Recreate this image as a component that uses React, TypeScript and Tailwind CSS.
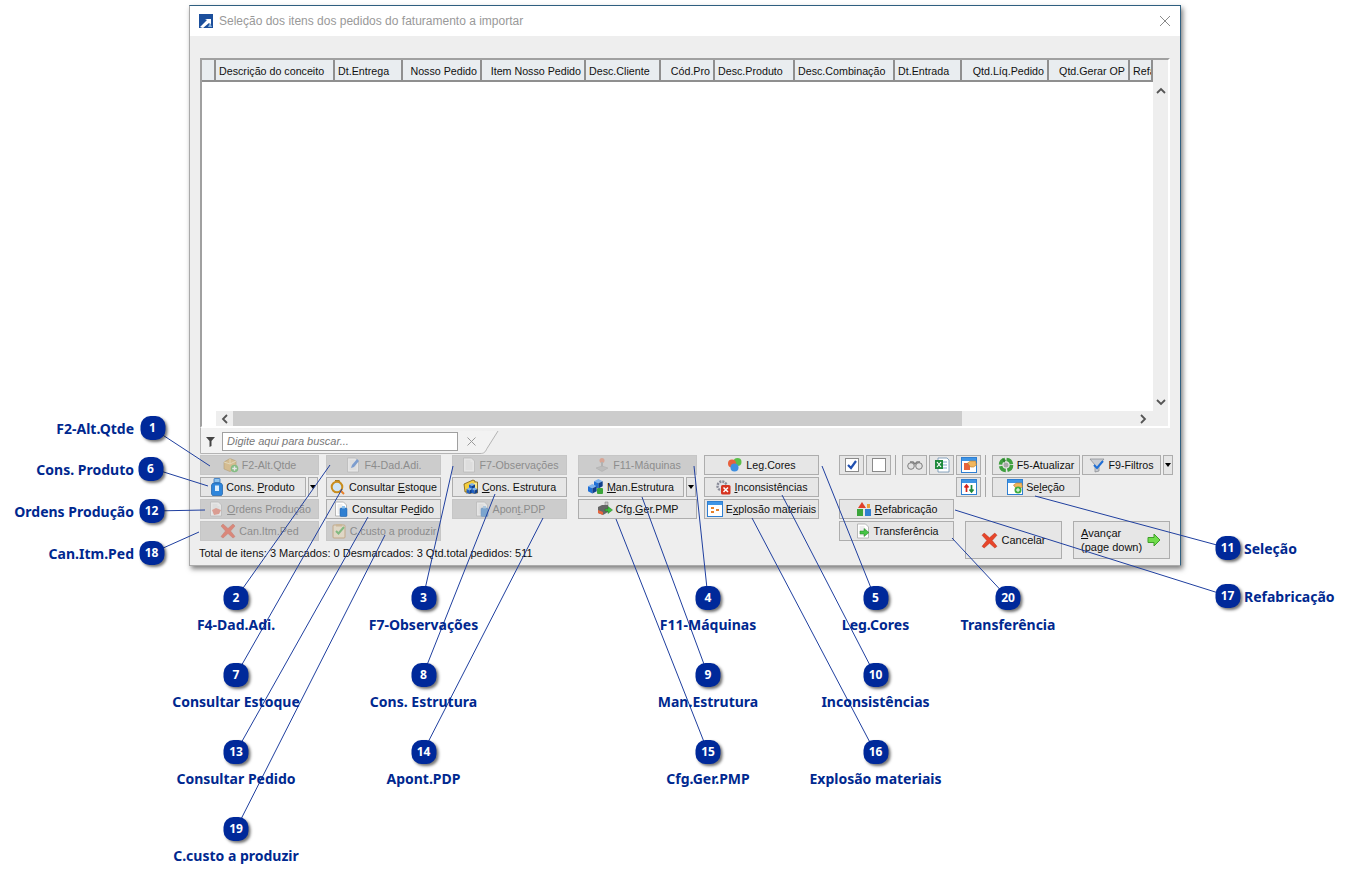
import { ReactNode } from "react";

// ---- small toolbar icons, 16x16 -------------------------------------------
const Box = () => (
  <svg width="16" height="16" viewBox="0 0 16 16">
    <path d="M1 5l6-3.500 6 2.500v7l-6 3.500-6-2.500z" fill="#dcae57" stroke="#9a7428" strokeWidth=".6" />
    <path d="M7 1.500V7M1 5l6 2 6-3" fill="none" stroke="#f5e2a8" />
    <circle cx="11.500" cy="11.500" r="3.800" fill="#3fae3f" />
    <path d="M11.500 9.200v4.600M9.200 11.500h4.600" stroke="#fff" strokeWidth="1.400" />
  </svg>
);
const Bottle = () => (
  <svg width="12" height="18" viewBox="0 0 12 18">
    <rect x="3" y=".5" width="6" height="4" rx=".5" fill="#8ec4ef" stroke="#1f66b5" strokeWidth=".7" />
    <path d="M2 5h8l1.500 2v9l-1 1.500h-9l-1-1.500V7z" fill="#2f86db" stroke="#1b5ea8" strokeWidth=".7" />
    <rect x="4" y="7.500" width="4" height="5.500" fill="#dcedfb" />
  </svg>
);
const Paper = ({ children }: { children?: ReactNode }) => (
  <svg width="16" height="16" viewBox="0 0 16 16">
    <path d="M2.500 1h8l3 3v11h-11z" fill="#fff" stroke="#a8a8a8" strokeWidth=".8" />
    <path d="M4.500 4h5M4.500 6h7M4.500 8h7M4.500 10h7M4.500 12h7" stroke="#d4d4d4" strokeWidth=".8" />
    {children}
  </svg>
);
const BigX = ({ s = 16 }: { s?: number }) => (
  <svg width={s} height={s} viewBox="0 0 16 16">
    <path d="M1 3l2-2 5 4.500L13 1l2 2-4.500 5 4.500 5.500-2 1.500L8 10.500 3 15l-2-1.500L5.500 8z" fill="#e8452a" stroke="#b8331c" strokeWidth=".5" />
  </svg>
);
const Ring = () => (
  <svg width="16" height="16" viewBox="0 0 16 16">
    <path d="M5 1.500h4l1 2" fill="none" stroke="#a8791f" strokeWidth="1.200" />
    <circle cx="7" cy="8" r="5.300" fill="#cfe5f7" stroke="#c98d1e" strokeWidth="2" />
    <path d="M11 12l3 3" stroke="#e8812a" strokeWidth="2" />
  </svg>
);
const PaperBottle = () => (
  <Paper>
    <rect x="7" y="7" width="7" height="8.500" rx="1" fill="#2f7fd1" stroke="#1b5ea8" strokeWidth=".5" />
    <rect x="9" y="5" width="3" height="2.500" fill="#8ec4ef" />
  </Paper>
);
const Clip = () => (
  <svg width="16" height="16" viewBox="0 0 16 16">
    <rect x="2" y="2" width="12" height="13" rx="1" fill="#f3e2c2" stroke="#b98a4a" />
    <rect x="5" y="1" width="6" height="2.500" fill="#c9a36a" />
    <path d="M5 8l2.500 2.500L13 4" fill="none" stroke="#38a838" strokeWidth="2" />
  </svg>
);
const Cube = ({ x, y, c }: { x: number; y: number; c: string }) => (
  <g transform={`translate(${x} ${y})`}>
    <path d="M0 1.500L3 0l3 1.500L3 3z" fill="#7fb4ee" />
    <path d="M0 1.500L3 3v3.500L0 5z" fill={c} />
    <path d="M6 1.500L3 3v3.500L6 5z" fill="#0f3f8c" />
  </g>
);
const FolderCubes = () => (
  <svg width="16" height="16" viewBox="0 0 16 16">
    <path d="M1 5l9-4 2 1v11H2z" fill="#f5cf3f" stroke="#7a5a10" strokeWidth=".8" />
    <path d="M12 3h2.500v11H3" fill="#fbe88c" stroke="#7a5a10" strokeWidth=".8" />
    <Cube x={6} y={4} c="#1f5fc4" />
    <Cube x={3.500} y={8.500} c="#1f5fc4" />
    <Cube x={8.500} y={8.500} c="#1f5fc4" />
  </svg>
);
const Joystick = () => (
  <svg width="16" height="16" viewBox="0 0 16 16">
    <circle cx="8" cy="3.500" r="2.500" fill="#e2805f" />
    <rect x="7" y="5" width="2" height="5" fill="#999" />
    <path d="M2 11l6-2 6 2-6 3.500z" fill="#b0b0b0" stroke="#8a8a8a" strokeWidth=".5" />
  </svg>
);
const Cubes = () => (
  <svg width="16" height="16" viewBox="0 0 16 16">
    <g transform="translate(6 0) scale(1.450)"><path d="M0 1.500L3 0l3 1.500L3 3z" fill="#7fb4ee" /><path d="M0 1.500L3 3v3.500L0 5z" fill="#1f6fd6" /><path d="M6 1.500L3 3v3.500L6 5z" fill="#0f3f8c" /></g>
    <g transform="translate(0 5) scale(1.450)"><path d="M0 1.500L3 0l3 1.500L3 3z" fill="#7fb4ee" /><path d="M0 1.500L3 3v3.500L0 5z" fill="#1f6fd6" /><path d="M6 1.500L3 3v3.500L6 5z" fill="#0f3f8c" /></g>
    <rect x="9" y="9" width="6" height="6" rx="1" fill="#3ba53b" />
  </svg>
);
const Printer = () => (
  <svg width="16" height="16" viewBox="0 0 16 16">
    <path d="M8 1h3v4H8z" fill="#c9c9c9" stroke="#777" strokeWidth=".5" />
    <path d="M1 6l4-2h6v7l-5 3-5-2z" fill="#666" />
    <path d="M1 9l5 2v3l-5-2z" fill="#e8643c" />
    <path d="M8 8h3V5.500L15.500 9 11 12.500V10H8z" fill="#3fbf3f" stroke="#1f7f1f" strokeWidth=".5" />
  </svg>
);
const Dots = () => (
  <svg width="16" height="16" viewBox="0 0 16 16">
    <circle cx="10.500" cy="5" r="4" fill="#5bbf4a" />
    <circle cx="5" cy="6.500" r="4" fill="#e8603c" />
    <circle cx="7.500" cy="10.500" r="4" fill="#3f8fe0" />
  </svg>
);
const GearX = () => (
  <svg width="16" height="16" viewBox="0 0 16 16">
    <circle cx="7" cy="7" r="4.500" fill="#dfe1e6" stroke="#8a8c99" strokeWidth="2.400" strokeDasharray="2 1" />
    <rect x="6" y="6" width="9.500" height="9.500" rx="1.500" fill="#d63320" />
    <path d="M8.500 8.500l4.500 4.500M13 8.500L8.500 13" stroke="#fff" strokeWidth="1.500" />
  </svg>
);
const Win = ({ children }: { children?: ReactNode }) => (
  <svg width="16" height="16" viewBox="0 0 16 16">
    <rect x=".5" y=".5" width="15" height="15" fill="#fff" stroke="#2f7fd1" />
    <rect x="1" y="1" width="14" height="3" fill="#3f95e6" />
    {children}
  </svg>
);
const Check = ({ on }: { on?: boolean }) => (
  <svg width="14" height="14" viewBox="0 0 14 14">
    <rect x=".5" y=".5" width="13" height="13" fill="#fff" stroke="#8a8a8a" />
    {on && <path d="M3 7l3 3 5-7" fill="none" stroke="#1f4fb0" strokeWidth="2.200" />}
  </svg>
);
const Binoculars = () => (
  <svg width="16" height="12" viewBox="0 0 16 12">
    <circle cx="4" cy="7" r="3.300" fill="#e2e2e2" stroke="#7d7d7d" />
    <circle cx="12" cy="7" r="3.300" fill="#e2e2e2" stroke="#7d7d7d" />
    <path d="M3 3h3l2 2 2-2h3" fill="none" stroke="#7d7d7d" strokeWidth="1.400" />
  </svg>
);
const Excel = () => (
  <svg width="16" height="16" viewBox="0 0 16 16">
    <path d="M4 1h9l2 2v12H4z" fill="#fff" stroke="#6c8fb0" strokeWidth=".8" />
    <path d="M8 5h5M8 8h5M8 11h5" stroke="#7ea6c9" />
    <rect x="1" y="3" width="8" height="9" fill="#1f8a3c" />
    <path d="M3 5l4 5M7 5l-4 5" stroke="#fff" strokeWidth="1.200" />
  </svg>
);
const Hand = () => (
  <svg width="10" height="8" x="6" y="3" viewBox="0 0 9 8">
    <path d="M0 3l3-2h5l1 4-3 2H3z" fill="#f2b75e" stroke="#b97a26" strokeWidth=".6" />
  </svg>
);
const ArrowsUD = () => (
  <Win>
    <path d="M5.500 13V7M3.500 8.500l2-2.500 2 2.500" fill="none" stroke="#d4241c" strokeWidth="1.700" />
    <path d="M10.500 6v6M8.500 10.500l2 2.500 2-2.500" fill="none" stroke="#1f8a3c" strokeWidth="1.700" />
  </Win>
);
const Recycle = () => (
  <svg width="16" height="16" viewBox="0 0 16 16">
    <circle cx="8" cy="8" r="5.500" fill="none" stroke="#3f9f3f" strokeWidth="3.600" strokeDasharray="7 1.600" />
    <circle cx="8" cy="8" r="2.500" fill="#a8a8a8" />
    <path d="M4 1.500l4 1.500-2 3z" fill="#2f7f2f" />
  </svg>
);
const Funnel = () => (
  <svg width="16" height="16" viewBox="0 0 16 16">
    <path d="M1 2h14L10 8v6l-4 1V8z" fill="#c9ccd2" stroke="#84868c" strokeWidth=".7" />
    <path d="M5 8l3 3 6-7" fill="none" stroke="#1f6fd6" strokeWidth="2" />
  </svg>
);
const Triangles = () => (
  <svg width="16" height="16" viewBox="0 0 16 16">
    <path d="M6 1l4 6H2z" fill="#e0402a" />
    <rect x="1" y="8" width="6" height="7" fill="#3ba53b" />
    <rect x="9" y="8" width="6" height="7" fill="#2f7fd1" />
    <path d="M11 3h3v4h-3z" fill="#e8a13a" />
  </svg>
);
const PageArrow = () => (
  <Paper>
    <path d="M5 8h4V5.500l5 4-5 4V11H5z" fill="#45c445" stroke="#1f7f1f" strokeWidth=".5" />
  </Paper>
);
const GreenArrow = () => (
  <svg width="14" height="14" viewBox="0 0 14 14">
    <path d="M1 4.500h6V1l6 6-6 6V9.500H1z" fill="#6fdc4a" stroke="#3f9f2a" />
  </svg>
);

// ---- buttons --------------------------------------------------------------
const Btn = ({
  icon,
  off,
  className = "",
  children,
}: {
  icon?: ReactNode;
  off?: boolean;
  className?: string;
  children?: ReactNode;
}) => (
  <div
    className={`h-5 flex items-center justify-center gap-[3px] border text-[10.7px] whitespace-nowrap overflow-hidden ${
      off ? "bg-[#cccccc] border-[#c6c6c6] text-[#8c8c8c]" : "bg-[#e6e6e6] border-[#adadad] text-[#111]"
    } ${className}`}
  >
    {icon && <span className={`flex shrink-0 ${off ? "opacity-50" : ""}`}>{icon}</span>}
    {children && <span>{children}</span>}
  </div>
);

const Drop = () => (
  <div className="w-[10px] h-5 bg-[#e6e6e6] border border-[#adadad] flex items-center justify-center">
    <div className="w-0 h-0 border-x-[3.5px] border-x-transparent border-t-[4px] border-t-black" />
  </div>
);

const Sep = () => <div className="w-px h-5 bg-[#a8a8a8]" />;

const U = ({ children }: { children: ReactNode }) => <span className="underline">{children}</span>;

const columns: [string, number, string][] = [
  ["", 14, ""],
  ["Descrição do conceito", 119, "text-left"],
  ["Dt.Entrega", 68, "text-left"],
  ["Nosso Pedido", 79, "text-right"],
  ["Item Nosso Pedido", 104, "text-right"],
  ["Desc.Cliente", 75, "text-left"],
  ["Cód.Pro", 54, "text-right"],
  ["Desc.Produto", 80, "text-left"],
  ["Desc.Combinação", 100, "text-left"],
  ["Dt.Entrada", 67, "text-left"],
  ["Qtd.Líq.Pedido", 87, "text-right"],
  ["Qtd.Gerar OP", 81, "text-right"],
  ["Refa", 23, "text-left"],
];

// leader lines of the callouts: badge centre -> end on the screen
const lines: [number, number, number, number][] = [
  [152, 428, 210, 466],
  [151, 468, 208, 486],
  [152, 511, 205, 510],
  [152, 553, 199, 532],
  [236, 598, 330, 465],
  [236, 675, 342, 489],
  [236, 752, 368, 517],
  [236, 829, 385, 535],
  [423, 598, 453, 466],
  [423, 675, 495, 494],
  [423, 752, 543, 518],
  [708, 598, 694, 466],
  [708, 675, 642, 497],
  [708, 752, 616, 519],
  [875, 598, 822, 466],
  [875, 675, 782, 495],
  [875, 752, 752, 518],
  [1008, 598, 952, 538],
  [1228, 548, 1035, 496],
  [1228, 596, 955, 510],
];

const leftNotes = [
  { n: 1, label: "F2-Alt.Qtde", x: 152.5, y: 428 },
  { n: 6, label: "Cons. Produto", x: 150.5, y: 469 },
  { n: 12, label: "Ordens Produção", x: 151.5, y: 511 },
  { n: 18, label: "Can.Itm.Ped", x: 151.5, y: 553 },
];

const bottomNotes = [
  { n: 2, label: "F4-Dad.Adi.", x: 236, y: 598 },
  { n: 7, label: "Consultar Estoque", x: 236, y: 675 },
  { n: 13, label: "Consultar Pedido", x: 236, y: 752 },
  { n: 19, label: "C.custo a produzir", x: 236, y: 829 },
  { n: 3, label: "F7-Observações", x: 423.5, y: 598 },
  { n: 8, label: "Cons. Estrutura", x: 423.5, y: 675 },
  { n: 14, label: "Apont.PDP", x: 423.5, y: 752 },
  { n: 4, label: "F11-Máquinas", x: 708, y: 598 },
  { n: 9, label: "Man.Estrutura", x: 708, y: 675 },
  { n: 15, label: "Cfg.Ger.PMP", x: 708, y: 752 },
  { n: 5, label: "Leg.Cores", x: 875.5, y: 598 },
  { n: 10, label: "Inconsistências", x: 875.5, y: 675 },
  { n: 16, label: "Explosão materiais", x: 875.5, y: 752 },
  { n: 20, label: "Transferência", x: 1008, y: 598 },
];

const rightNotes = [
  { n: 11, label: "Seleção", x: 1227.5, y: 548 },
  { n: 17, label: "Refabricação", x: 1227.5, y: 596 },
];

const Badge = ({ n, x, y }: { n: number; x: number; y: number }) => (
  <div
    className="absolute w-[25px] h-6 -translate-x-1/2 -translate-y-1/2 rounded-[10px] bg-[#00299a] shadow-[2px_2px_3px_rgba(0,0,0,0.55)] flex items-center justify-center text-white text-xs font-bold"
    style={{ left: x, top: y }}
  >
    {n}
  </div>
);

const noteText = "absolute text-sm leading-5 font-bold text-[#00288f] whitespace-nowrap";

export default function App() {
  return (
    <div className="relative w-[1350px] h-[882px] bg-white overflow-hidden font-['Noto_Sans',sans-serif]">
      {/* window */}
      <div className="ml-[189px] mt-[5px] absolute w-[992px] h-[561px] flex flex-col bg-[#eeeeee] border border-[#aaaaaa] border-t-[#2f5f80] border-r-[#2f5f80] shadow-[2px_3px_5px_rgba(0,0,0,0.5)] font-['Liberation_Sans',sans-serif] text-[11px]">
        <div className="h-[30px] shrink-0 bg-white flex items-center pl-[9px] pr-[9px] justify-between">
          <div className="flex items-center gap-[6px]">
            <svg width="14" height="14" viewBox="0 0 14 14">
              <rect width="14" height="14" fill="#1c4f9c" />
              <path d="M1 13l7-7-2-1h6v6l-2-2-6 5z" fill="#fff" />
              <path d="M9 13l2-4 2 4z" fill="#8fb4d9" />
            </svg>
            <span className="text-xs text-[#999999]">Seleção dos itens dos pedidos do faturamento a importar</span>
          </div>
          <svg width="12" height="12" viewBox="0 0 12 12">
            <path d="M1 1l10 10M11 1L1 11" stroke="#8a8a8a" />
          </svg>
        </div>

        <div className="flex-1 flex flex-col pl-[10px] pt-[22px]">
          {/* grid */}
          <div className="w-[970px] h-[370px] shrink-0 flex flex-col border-2 border-white border-t-[#a0a0a0] border-l-[#a0a0a0] bg-white">
            <div className="h-[22px] flex shrink-0">
              {columns.map(([title, w, align], i) => (
                <div
                  key={i}
                  className={`shrink-0 h-full bg-[#e9edf0] border-r-2 border-b-2 border-[#8f8f8f] px-[3px] text-[10.7px] leading-[23px] whitespace-nowrap overflow-hidden text-[#111] ${align}`}
                  style={{ width: w }}
                >
                  {title}
                </div>
              ))}
              <div className="flex-1 bg-[#eeeeee]" />
            </div>
            <div className="flex-1 flex min-h-0">
              <div className="flex-1 bg-white" />
              <div className="w-[15px] bg-[#eeeeee] flex flex-col justify-between items-center pt-[5px] pb-[5px]">
                <svg width="10" height="8" viewBox="0 0 10 8">
                  <path d="M1 6l4-4 4 4" fill="none" stroke="#555" strokeWidth="1.800" />
                </svg>
                <svg width="10" height="8" viewBox="0 0 10 8">
                  <path d="M1 2l4 4 4-4" fill="none" stroke="#555" strokeWidth="1.800" />
                </svg>
              </div>
            </div>
            <div className="h-[15px] shrink-0 flex items-center">
              <div className="w-[14px] h-full bg-white" />
              <div className="flex-1 h-full flex items-center bg-[#eeeeee]">
                <div className="w-[17px] flex justify-center">
                  <svg width="8" height="10" viewBox="0 0 8 10">
                    <path d="M6 1L2 5l4 4" fill="none" stroke="#555" strokeWidth="1.800" />
                  </svg>
                </div>
                <div className="w-[729px] h-full bg-[#cccccc]" />
                <div className="flex-1 flex justify-end pr-[21px]">
                  <svg width="8" height="10" viewBox="0 0 8 10">
                    <path d="M2 1l4 4-4 4" fill="none" stroke="#555" strokeWidth="1.800" />
                  </svg>
                </div>
              </div>
            </div>
          </div>

          {/* search tab */}
          <div className="relative h-[26px] w-[300px] shrink-0 flex items-center">
            <svg className="absolute left-0 top-0" width="300" height="27" viewBox="0 0 300 27">
              <path d="M.5 0v25.500H280c4 0 5-1 7-5L298 3" fill="#f2f2f2" stroke="#b4b4b4" />
            </svg>
            <svg className="relative ml-[6px]" width="9" height="11" viewBox="0 0 9 11">
              <path d="M0 1h9L5.500 5v5l-2 1V5z" fill="#444" />
            </svg>
            <div className="relative ml-[7px] w-[236px] h-[19px] bg-white border border-[#a0a0a0] px-1 leading-[17px] italic text-[#777777]">
              Digite aqui para buscar...
            </div>
            <svg className="relative ml-[9px]" width="9" height="9" viewBox="0 0 9 9">
              <path d="M.5.5l8 8M8.500.5l-8 8" stroke="#9a9a9a" />
            </svg>
          </div>

          {/* toolbars */}
          <div className="flex mt-px">
            <div className="w-[619px] shrink-0 flex flex-col">
              <div className="flex">
                <div className="w-[119px] flex flex-col gap-[2px]">
                  <Btn off icon={<Box />}>F2-Alt.Qtde</Btn>
                  <div className="flex gap-[2px]">
                    <Btn icon={<Bottle />} className="w-[106px]">Cons. <U>P</U>roduto</Btn>
                    <Drop />
                  </div>
                  <Btn off icon={<Paper><path d="M4 9l4-2 5 2-2 4-5 1z" fill="#e8705a" /></Paper>}><U>O</U>rdens Produção</Btn>
                  <Btn off icon={<BigX />}>Can.Itm.Ped</Btn>
                </div>
                <div className="w-[115px] ml-[7px] flex flex-col gap-[2px]">
                  <Btn off icon={<Paper><path d="M6 11l1-3 5-6 2 2-5 6z" fill="#2f6fd1" /></Paper>}>F4-Dad.Adi.</Btn>
                  <Btn icon={<Ring />}>Consultar <U>E</U>stoque</Btn>
                  <Btn icon={<PaperBottle />}>Consultar Pe<U>d</U>ido</Btn>
                  <Btn off icon={<Clip />}>C.custo a produzir</Btn>
                </div>
                <div className="w-[115px] ml-[11px] flex flex-col gap-[2px]">
                  <Btn off icon={<Paper />}>F7-Observações</Btn>
                  <Btn icon={<FolderCubes />}><U>C</U>ons. Estrutura</Btn>
                  <Btn off icon={<PaperBottle />}>Apon<U>t</U>.PDP</Btn>
                </div>
                <div className="w-[119px] ml-[11px] flex flex-col gap-[2px]">
                  <Btn off icon={<Joystick />}>F11-Máquinas</Btn>
                  <div className="flex gap-[2px]">
                    <Btn icon={<Cubes />} className="w-[106px]"><U>M</U>an.Estrutura</Btn>
                    <Drop />
                  </div>
                  <Btn icon={<Printer />}>Cfg.<U>G</U>er.PMP</Btn>
                </div>
                <div className="w-[115px] ml-[7px] flex flex-col gap-[2px]">
                  <Btn icon={<Dots />}>Leg.Cores</Btn>
                  <Btn icon={<GearX />}><U>I</U>nconsistências</Btn>
                  <Btn icon={<Win><path d="M4 6h3v2H4zM4 10h3v2H4zM9 8h3v2H9z" fill="#e8812a" /></Win>}>E<U>x</U>plosão materiais</Btn>
                </div>
              </div>
              <div className="mt-[4px] leading-4 text-[#111] whitespace-nowrap -ml-px">
                Total de itens: 3 Marcados: 0 Desmarcados: 3 Qtd.total pedidos: 511
              </div>
            </div>

            <div className="ml-[20px] w-[334px] flex flex-col gap-[2px]">
              <div className="flex items-center">
                <Btn icon={<Check on />} className="w-[25px]" />
                <Btn icon={<Check />} className="w-[25px] ml-[2px]" />
                <div className="ml-[4px] mr-[6px]"><Sep /></div>
                <Btn icon={<Binoculars />} className="w-[25px]" />
                <Btn icon={<Excel />} className="w-[25px] ml-[2px]" />
                <Btn icon={<Win><rect x="3" y="6" width="6" height="7" fill="#e8643c" /><Hand /></Win>} className="w-[25px] ml-[2px]" />
                <div className="ml-[4px] mr-[6px]"><Sep /></div>
                <Btn icon={<Recycle />} className="w-[88px]">F5-Atualizar</Btn>
                <Btn icon={<Funnel />} className="w-[79px] ml-[2px]">F9-Filtros</Btn>
                <div className="ml-[2px]"><Drop /></div>
              </div>
              <div className="flex items-center pl-[117px]">
                <Btn icon={<ArrowsUD />} className="w-[25px]" />
                <div className="ml-[4px] mr-[6px]"><Sep /></div>
                <Btn icon={<Win><Hand /><circle cx="11" cy="11" r="3.500" fill="#3fae3f" /><path d="M11 9v4M9 11h4" stroke="#fff" /></Win>} className="w-[88px]">Se<U>l</U>eção</Btn>
              </div>
              <div className="flex">
                <div className="w-[115px] flex flex-col gap-[2px]">
                  <Btn icon={<Triangles />}><U>R</U>efabricação</Btn>
                  <Btn icon={<PageArrow />}>Transferência</Btn>
                </div>
                <div className="ml-[11px] mt-[22px] w-[97px] h-[38px] bg-[#e6e6e6] border border-[#adadad] flex items-center justify-center gap-[3px] text-[#111]">
                  <BigX s={17} />
                  Cancelar
                </div>
                <div className="ml-[11px] mt-[22px] w-[97px] h-[38px] bg-[#e6e6e6] border border-[#adadad] flex items-center pl-[7px] gap-[5px] text-[#111] leading-[14px] whitespace-nowrap">
                  <div>
                    <U>A</U>vançar
                    <br />
                    (page down)
                  </div>
                  <GreenArrow />
                </div>
              </div>
            </div>
          </div>
        </div>
      </div>

      {/* callouts */}
      <svg className="absolute left-0 top-0 pointer-events-none" width="1350" height="882" viewBox="0 0 1350 882">
        {lines.map(([x1, y1, x2, y2], i) => (
          <line key={i} x1={x1} y1={y1} x2={x2} y2={y2} stroke="#1f3f9f" strokeWidth="1" />
        ))}
      </svg>

      {leftNotes.map((a) => (
        <div key={a.n}>
          <Badge n={a.n} x={a.x} y={a.y} />
          <div className={`${noteText} -translate-x-full -translate-y-1/2`} style={{ left: 134, top: a.y + 1 }}>
            {a.label}
          </div>
        </div>
      ))}
      {bottomNotes.map((a) => (
        <div key={a.n}>
          <Badge n={a.n} x={a.x} y={a.y} />
          <div className={`${noteText} -translate-x-1/2 -translate-y-1/2`} style={{ left: a.x, top: a.y + 27 }}>
            {a.label}
          </div>
        </div>
      ))}
      {rightNotes.map((a) => (
        <div key={a.n}>
          <Badge n={a.n} x={a.x} y={a.y} />
          <div className={`${noteText} -translate-y-1/2`} style={{ left: 1244, top: a.y + 1 }}>
            {a.label}
          </div>
        </div>
      ))}
    </div>
  );
}
